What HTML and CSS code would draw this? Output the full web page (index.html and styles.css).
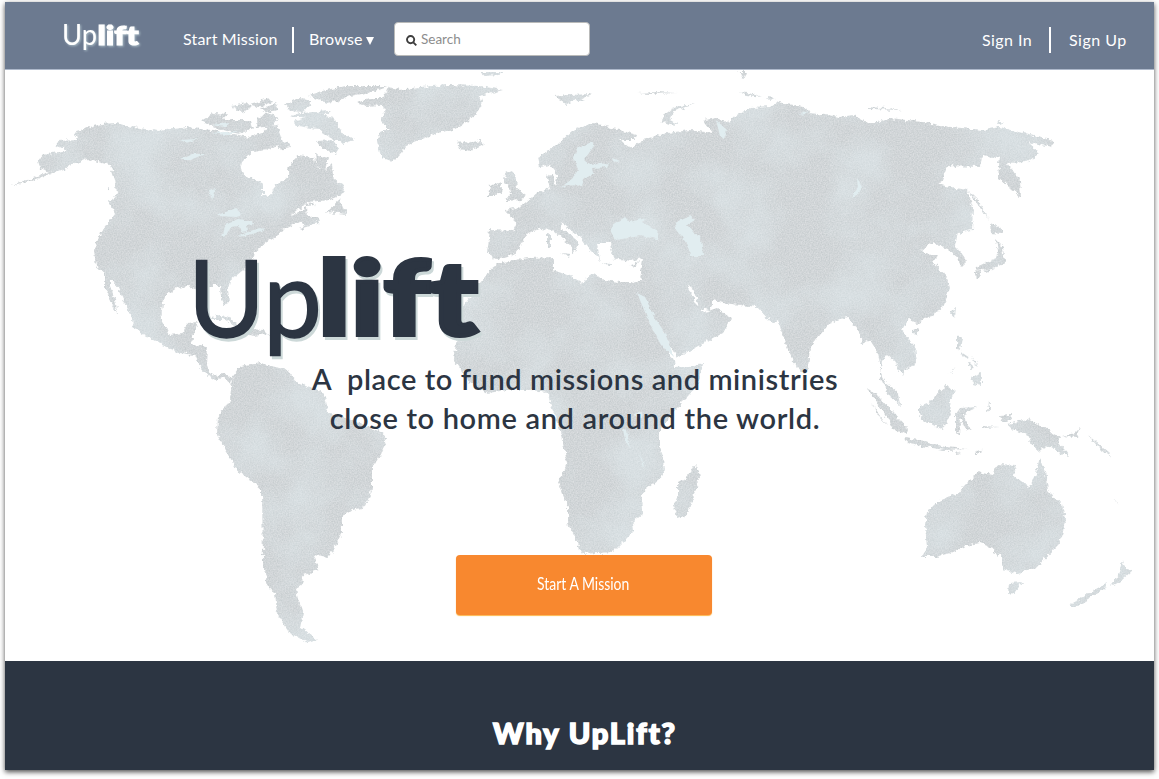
FILE: index.html
```html
<!DOCTYPE html>
<html lang="en">
<head>
<meta charset="utf-8">
<title>Uplift</title>
<link rel="stylesheet" href="styles.css">
</head>
<body>
<div class="page">
  <header class="nav">
    <svg class="nav-logo" viewBox="0 0 84 36" role="img" aria-label="Uplift">
      <text class="logo-thin" x="0" y="25" font-size="28" textLength="35" lengthAdjust="spacingAndGlyphs">Up</text>
      <text class="logo-heavy small" x="35.5" y="25" font-size="27" textLength="41" lengthAdjust="spacingAndGlyphs">lift</text>
    </svg>
    <a class="nav-link start">Start Mission</a>
    <span class="divider"></span>
    <a class="nav-link browse">Browse<svg class="caret" viewBox="0 0 8 8"><path d="M0 0h8L4 8z"/></svg></a>
    <div class="search">
      <svg class="search-icon" viewBox="0 0 11 11"><circle cx="4.6" cy="4.6" r="3.6"/><path d="M7.3 7.3l3 3"/></svg>
      <span>Search</span>
    </div>
    <a class="nav-link sign-in">Sign In</a>
    <span class="divider right"></span>
    <a class="nav-link sign-up">Sign Up</a>
  </header>

  <main class="hero">
    <svg class="map" viewBox="5 70 1149 591" aria-hidden="true">
      <defs>
        <filter id="land" filterUnits="userSpaceOnUse" x="5" y="70" width="1149" height="591" color-interpolation-filters="sRGB">
          <feTurbulence type="fractalNoise" baseFrequency="0.22" numOctaves="3" seed="4" result="coast"/>
          <feDisplacementMap in="SourceGraphic" in2="coast" scale="6" xChannelSelector="R" yChannelSelector="G" result="shape"/>
          <feTurbulence type="fractalNoise" baseFrequency="0.75" numOctaves="2" seed="9" result="fine"/>
          <feColorMatrix in="fine" type="matrix" values="0.14 0 0 0 0.75  0.12 0 0 0 0.777  0.12 0 0 0 0.786  0 0 0 0 1" result="grain"/>
          <feTurbulence type="fractalNoise" baseFrequency="0.018" numOctaves="5" seed="21" result="broad"/>
          <feColorMatrix in="broad" type="matrix" values="0 0 0 0 0.89  0 0 0 0 0.935  0 0 0 0 0.95  2.6 0 0 0 -1" result="clouds"/>
          <feMerge result="paper"><feMergeNode in="grain"/><feMergeNode in="clouds"/></feMerge>
          <feComposite in="grain" in2="paper" operator="arithmetic" k1="0" k2="0.6" k3="0.4" k4="0" result="mix"/>
          <feComposite in="mix" in2="shape" operator="in"/>
        </filter>
        <filter id="rough" filterUnits="userSpaceOnUse" x="5" y="70" width="1149" height="591" color-interpolation-filters="sRGB">
          <feTurbulence type="fractalNoise" baseFrequency="0.18" numOctaves="3" seed="7"/>
          <feDisplacementMap in="SourceGraphic" scale="4" xChannelSelector="R" yChannelSelector="G"/>
        </filter>
      </defs>
      <g filter="url(#land)">
        <!-- North and Central America -->
        <path d="M38 162L43 155 67 150 55 145 58 141 78 140 74 132 87 128 100 124 115 123 133 127 159 131 187 127 200 129 213 130 233 134 250 137 262 133 268 126 277 125 283 142 277 145 267 150 253 152 240 165 243 175 263 183 263 195 268 198 273 190 275 185 288 177 288 168 298 155 313 157 317 167 325 170 332 163 333 177 345 188 342 195 330 200 307 202 290 217 307 207 308 217 318 216 320 220 304 226 300 222 283 230 278 236 267 242 255 252 254 258 243 270 230 281 228 290 229 300 225 306 221 297 220 286 208 286 197 289 188 286 177 288 166 295 163 302 161 320 170 335 182 333 187 323 198 322 193 337 192 345 208 347 207 365 209 371 217 377 223 373 232 378 230 383 222 377 215 380 206 374 200 367 195 355 180 353 162 345 148 337 133 328 132 318 125 303 115 282 110 279 110 287 115 300 118 315 113 308 105 287 105 273 96 267 94 250 100 233 115 213 110 203 117 193 115 180 110 165 98 162 87 159 70 166 53 173 40 168Z"/>
        <path d="M9 186L32 178 52 171 56 172 34 180Z"/>
        <!-- Arctic archipelago -->
        <path d="M202 121L215 113 227 114 222 120 251 120 253 129 238 134 216 128ZM231 106L247 103 252 107 243 112ZM256 119L268 113 278 117 272 126 257 128ZM284 104L300 98 312 102 304 112 290 111ZM309 95L326 90 345 86 389 86 372 92 350 96 338 101 326 103ZM293 121L315 114 334 118 342 133 354 140 343 144 326 135 318 129 298 126ZM317 141L333 140 339 149 336 154 322 148ZM277 144L288 142 291 147 279 150ZM261 108L276 104 279 110 266 112ZM288 117L300 113 330 111 324 116 300 117ZM250 104L268 98 272 102 258 107Z"/>
        <path d="M315 154L329 158 324 170 316 165ZM326 212L340 199 347 214 338 213ZM303 205L312 203 316 205 306 206ZM299 228L318 220 319 223 301 229ZM109 199L119 204 118 210 110 204ZM107 187L109 188 107 193Z"/>
        <!-- Greenland and Iceland -->
        <path d="M357 102L370 98 383 98 388 88 400 90 420 87 447 85 480 86 503 90 480 96 482 102 477 112 468 122 453 130 437 133 420 140 407 145 401 154 393 162 382 158 380 152 377 140 382 130 390 130 380 120 385 110 382 105 365 106Z"/>
        <path d="M457 140L462 145 464 141 470 143 480 140 485 144 470 151 460 149Z"/>
        <!-- Caribbean -->
        <path d="M209 319L222 315 233 320 243 328 237 328 224 319ZM247 329L264 330 268 334 254 336 246 334Z"/>
        <!-- South America -->
        <path d="M232 378L240 367 260 363 287 370 297 382 323 392 326 400 328 412 357 422 383 433 386 445 380 456 372 467 372 490 365 507 352 510 342 517 342 532 336 545 328 558 313 555 319 570 303 575 304 583 296 588 298 600 303 613 300 627 317 640 308 643 290 633 277 613 275 593 268 587 263 563 262 490 250 480 237 470 227 452 217 435 218 417 230 400Z"/>
        <!-- Europe and Asia -->
        <path d="M490 230L513 231 517 223 505 210 520 207 537 193 550 188 547 177 553 173 555 185 558 175 550 165 540 168 538 157 557 145 573 130 593 123 613 128 637 135 635 140 620 140 630 148 643 140 667 133 690 130 713 133 703 120 717 118 730 123 733 117 750 108 770 107 778 102 807 108 810 113 840 117 853 115 870 124 890 118 930 123 950 127 983 130 1000 127 1030 135 1053 141 1052 147 1028 142 1040 153 1027 162 1007 163 1020 180 1021 198 998 177 1000 155 993 158 982 156 980 167 947 166 940 185 967 190 973 207 972 230 958 233 955 245 967 262 962 267 957 257 948 250 933 242 922 250 930 255 938 255 933 262 947 278 950 288 943 308 927 318 917 323 908 319 902 330 915 347 917 363 905 370 903 375 895 362 887 355 882 362 880 372 885 382 898 393 900 405 890 397 880 377 880 363 878 353 870 340 862 344 860 333 848 317 830 323 810 347 808 368 804 374 797 368 785 343 778 320 772 323 757 307 723 303 713 300 710 310 700 308 692 287 687 285 695 302 705 312 717 308 732 318 723 333 677 358 640 297 633 285 640 280 643 258 630 261 613 258 610 243 597 243 600 260 590 250 580 237 560 222 562 228 580 243 572 255 572 247 553 230 540 229 527 233 520 247 513 255 497 260 487 253Z"/>
        <path d="M505 173L512 170 516 178 517 188 525 194 522 200 505 201 510 194 509 187 504 183ZM490 186L501 182 502 190 495 196 488 196ZM547 234L551 235 551 247 547 247ZM562 253L571 254 570 257ZM601 263L611 264 608 266ZM630 265L639 261 636 266Z"/>
        <path d="M554 96L570 95 592 94 581 99 586 102 576 100 567 104ZM661 121L668 110 680 106 695 104 675 111 670 120 679 125 668 124ZM740 92L753 94 762 97 745 95ZM766 97L776 98 769 100ZM866 107L886 108 902 110 870 109ZM996 122L1004 122 1000 124ZM637 93L656 92 677 93 650 94ZM480 72L503 72 498 75 485 76ZM737 72L748 72 745 77Z"/>
        <!-- Africa and Madagascar -->
        <path d="M498 263L515 260 530 258 553 257 553 270 570 276 583 283 590 273 605 280 620 282 633 282 655 325 673 358 675 367 690 366 703 363 700 380 690 395 673 412 660 430 660 445 663 457 664 475 642 493 643 513 632 522 633 532 613 552 582 554 576 540 568 523 568 507 558 483 567 462 560 430 550 403 548 392 530 390 507 390 487 393 470 383 453 358 455 350 458 330 462 308 480 283 490 270Z"/>
        <path d="M697 464L700 477 695 492 687 515 678 518 673 508 678 495 678 482 688 476Z"/>
        <!-- Japan, Sakhalin, Taiwan, Philippines -->
        <path d="M967 189L978 200 989 219 983 212ZM990 223L1002 228 1002 234 991 233ZM996 240L1003 247 1004 256 1006 263 993 268 977 271 974 268 985 263 994 260 998 252ZM974 272L980 271 979 280 974 275ZM983 271L990 268 987 273ZM952 310L955 308 954 318 951 314ZM957 335L963 338 961 350 957 349ZM912 330L919 329 917 335 912 334ZM961 352L970 358 965 359ZM968 361L975 368 970 369ZM972 356L978 366 974 363ZM971 378L981 372 981 386 974 384Z"/>
        <!-- Indonesia and New Guinea -->
        <path d="M868 389L878 396 892 411 907 428 906 435 893 428 885 414 876 402ZM905 438L925 441 945 447 968 449 945 450 920 446 907 442ZM919 406L930 402 945 385 955 390 950 402 952 410 943 429 925 422 919 415ZM956 414L960 408 978 407 965 413 964 418 970 430 964 426 960 418 959 435 956 432ZM989 400L991 409 988 413ZM971 454L984 449 977 454ZM955 452L960 454 957 455ZM982 426L999 427 984 428ZM948 376L956 366 952 372ZM1000 416L1011 415 1010 422 1002 421ZM1008 424L1027 419 1040 425 1060 437 1058 442 1070 456 1060 454 1052 445 1039 451 1032 445 1027 434 1014 430ZM1062 436L1075 433 1081 427 1077 437ZM1087 434L1096 442 1109 453 1113 457 1099 448ZM1113 498L1120 505 1116 502ZM871 402L887 425 880 418Z"/>
        <!-- Australia and New Zealand -->
        <path d="M958 493L937 502 927 512 925 525 927 547 922 557 935 557 950 553 965 546 980 543 992 548 997 557 1002 553 1002 570 1017 573 1035 569 1058 545 1066 523 1062 505 1048 490 1045 472 1040 458 1035 477 1029 487 1013 475 1017 465 997 464 992 475 978 472 963 487ZM1009 583L1022 582 1015 593 1008 594ZM1122 560L1126 569 1133 570 1122 580 1111 586 1119 575ZM1107 583L1105 588 1092 597 1078 606 1069 606 1085 595Z"/>
      </g>
      <!-- Inland seas and lakes -->
      <g class="water" filter="url(#rough)">
        <path d="M577 148L592 142 594 146 584 160 590 165 609 163 607 167 592 168 593 174 584 179 582 186 567 185 560 188 572 179 578 170 574 158ZM612 158L620 161 614 163ZM613 225L625 217 630 222 645 218 642 222 658 232 658 239 640 236 616 240 611 234ZM675 223L690 216 695 220 687 225 694 233 701 238 703 256 690 256 688 245 676 230ZM637 293L645 297 655 318 665 333 674 357 661 345 650 324ZM716 120L727 130 724 139 720 136ZM857 179L862 187 857 195 851 197 858 188ZM217 216L235 208 243 215 236 217ZM222 237L226 224 238 219 252 221 254 225 246 226 247 232 241 233 239 226 230 227 226 236ZM237 237L250 231 265 227 262 231 245 236ZM209 190L215 188 212 200ZM180 160L193 154 205 154 190 160ZM179 140L198 139 186 143ZM212 125L230 123 225 127ZM211 133L238 131 227 135ZM633 414L641 411 642 417 636 417ZM623 429L627 430 629 442 630 448 625 440ZM640 452L643 462 644 472 642 464ZM798 115L807 111 806 114Z"/>
      </g>
    </svg>
    <div class="hero-content">
      <svg class="hero-logo" viewBox="0 0 300 130" role="img" aria-label="Uplift">
        <text class="logo-medium" x="-7" y="96.500" font-size="107" textLength="134" lengthAdjust="spacingAndGlyphs">Up</text>
        <text class="logo-heavy large" x="123" y="95" font-size="103" textLength="160" lengthAdjust="spacingAndGlyphs">lift</text>
      </svg>
      <h1 class="tagline"><span class="line-one">A&nbsp; place to fund missions and ministries</span><br><span class="line-two">close to home and around the world.</span></h1>
      <a class="cta"><span>Start A Mission</span></a>
    </div>
  </main>

  <section class="why">
    <h2>Why UpLift?</h2>
  </section>
</div>
</body>
</html>
```

FILE: styles.css
```css
* { box-sizing: border-box; }

body {
  margin: 0;
  height: 779px;
  padding: 2px 5px 0;
  background: #fff;
  font-family: Lato, "Open Sans", sans-serif;
  font-variant-ligatures: none;
  overflow: hidden;
}

.page {
  width: 1149px;
  height: 768px;
  background: #fff;
  box-shadow: 0 2px 5px rgba(0, 0, 0, .7);
}

.nav {
  display: flex;
  align-items: flex-start;
  height: 68px;
  background: #6c7a90;
  border-bottom: 1px solid #aeb9cb;
  color: #fff;
}

.nav-logo {
  width: 84px;
  height: 36px;
  margin: 18px 0 0 57px;
  fill: #fff;
  overflow: visible;
  filter: drop-shadow(1px 1px 1px rgba(200, 220, 225, .65));
}

.logo-thin { font-weight: 400; }
.logo-medium { font-weight: 400; stroke: #2c3542; stroke-width: 1.5; }
.logo-heavy { font-weight: 900; }
.logo-heavy.small { stroke: #fff; stroke-width: 1.2; }
.logo-heavy.large { stroke: #2c3542; stroke-width: 4; }

.nav-link {
  margin-top: 27px;
  font-size: 16px;
  line-height: 20px;
  letter-spacing: .2px;
  white-space: nowrap;
}

.start { margin-left: 37px; width: 109px; }
.browse { margin-left: 15px; width: 85px; }

.caret { width: 8px; height: 8px; margin-left: 3px; fill: #fff; }

.divider {
  width: 2px;
  height: 26px;
  margin-top: 25px;
  background: #fff;
}

.search {
  display: flex;
  align-items: center;
  width: 196px;
  height: 34px;
  margin-top: 20px;
  padding-left: 11px;
  border: 1px solid #b9bab9;
  border-radius: 4px;
  background: #fff;
  color: #8d8d8d;
  font-size: 13.5px;
}

.search-icon {
  width: 11px;
  height: 11px;
  margin: 3px 4px 0 0;
  fill: none;
  stroke: #3e3e3e;
  stroke-width: 1.9;
}

.sign-in { margin-left: auto; width: 67px; margin-top: 28px; letter-spacing: .45px; }
.sign-up { margin-left: 18px; width: 85px; margin-top: 28px; letter-spacing: .5px; }

.hero { display: grid; height: 591px; }

.map, .hero-content { grid-area: 1 / 1; }

.map { width: 1149px; height: 591px; }
.water { fill: #e1edf0; }

.hero-content {
  display: flex;
  flex-direction: column;
  align-items: flex-start;
  position: relative;
}

.hero-logo {
  width: 300px;
  height: 130px;
  margin: 170px 0 0 190px;
  fill: #2c3542;
  overflow: visible;
  filter: drop-shadow(2px 3px 0 #ccd8d8);
}

.tagline {
  align-self: center;
  width: 560px;
  margin: -11px 0 0 -9px;
  color: #2c3542;
  text-align: center;
  font-size: 29px;
  font-weight: 600;
  line-height: 39px;
  white-space: nowrap;
}

.line-one { letter-spacing: .58px; }
.line-two { letter-spacing: .65px; }

.cta {
  display: flex;
  justify-content: center;
  width: 256px;
  height: 60px;
  margin: 118px 0 0 451px;
  padding: 17px 2px 0 0;
  border-radius: 4px;
  background: #f8882f;
  box-shadow: 0 1px 1px #fdb64b;
  color: #fff;
  font-size: 17px;
  line-height: 24px;
}

.cta span { transform: scaleX(.82); white-space: nowrap; }

.why {
  height: 109px;
  padding-top: 53px;
  background: #2c3542;
  color: #fff;
  text-align: center;
}

.why h2 {
  margin: 0 0 0 11px;
  font-size: 29px;
  font-weight: 900;
  letter-spacing: 1.9px;
  line-height: 38px;
  -webkit-text-stroke: 1.6px #fff;
}
```
